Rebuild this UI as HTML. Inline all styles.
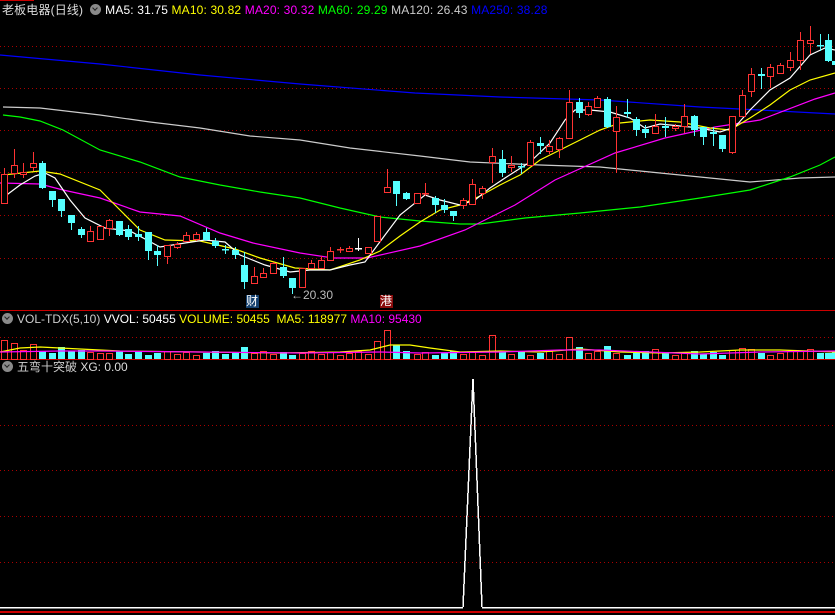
<!DOCTYPE html><html><head><meta charset="utf-8"><style>
body{margin:0;background:#000;width:835px;height:615px;overflow:hidden;position:relative;font-family:"Liberation Sans","Noto Sans CJK SC",sans-serif}
.t{position:absolute;font-size:12px;white-space:nowrap;line-height:14px}
.ic{display:inline-block;width:11px;height:11px;border-radius:50%;background:#8a8a8a;vertical-align:-1px;margin-right:4px;position:relative}
.ic:after{content:"";position:absolute;left:3px;top:2px;width:3px;height:3px;border-right:1.5px solid #222;border-bottom:1.5px solid #222;transform:rotate(45deg)}
</style></head><body>
<svg id="s" width="835" height="615" style="position:absolute;left:0;top:0" shape-rendering="crispEdges"></svg>
<div class="t" style="left:2px;top:3px;color:#ddd;letter-spacing:0.15px">老板电器(日线) &nbsp;<span class="ic"></span><span style="color:#fff">MA5: 31.75 </span> <span style="color:#ff0">MA10: 30.82</span> <span style="color:#f0f"> MA20: 30.32</span> <span style="color:#0f0"> MA60: 29.29</span> <span style="color:#ccc"> MA120: 26.43</span> <span style="color:#00f"> MA250: 38.28</span></div>
<div class="t" style="left:2px;top:312px;color:#ccc"><span class="ic"></span>VOL-TDX(5,10) <span style="color:#fff">VVOL: 50455</span> <span style="color:#ff0">VOLUME: 50455 &nbsp;MA5: 118977</span> <span style="color:#f0f">MA10: 95430</span></div>
<div class="t" style="left:2px;top:360px;color:#ccc"><span class="ic"></span>五弯十突破 <span style="color:#ddd">XG: 0.00</span></div>
<div class="t" style="left:246px;top:295px;width:13px;height:13px;background:#14406e;color:#fff;font-size:12px;line-height:13px">财</div>
<div class="t" style="left:380px;top:295px;width:13px;height:13px;background:#8a0c0c;color:#fff;font-size:12px;line-height:13px">港</div>
<div class="t" style="left:291px;top:288px;color:#bbb">←20.30</div>
<script>
var s=document.getElementById('s'),h='';
function L(x1,y1,x2,y2,c,w,d){h+='<line x1="'+x1+'" y1="'+y1+'" x2="'+x2+'" y2="'+y2+'" stroke="'+c+'" stroke-width="'+(w||1)+'"'+(d?' stroke-dasharray="1,3"':'')+'/>';}
function P(p,c){h+='<polyline fill="none" stroke="'+c+'" stroke-width="1.2" shape-rendering="auto" points="'+p+'"/>';}
[46,88,130,172,215,258].forEach(function(y){L(0,y+.5,835,y+.5,'#a00',1,1)});
L(0,337.5,835,337.5,'#a00',1,1);
[425,470,516,562].forEach(function(y){L(0,y+.5,835,y+.5,'#a00',1,1)});
L(0,0.5,34,0.5,'#c00');L(0,310.5,835,310.5,'#c00');L(0,359.5,835,359.5,'#c00');L(0,612,835,612,'#c00',2);
P('0,55 100,64 200,75 300,84 415,93 500,97 600,100 700,107 760,110 835,114','#00f');
P('3,107 40,108 100,115 150,122 200,128 250,136 300,140 350,148 420,156 470,162 540,165 600,167 650,172 700,177 750,182 800,178 835,177','#ccc');
P('3,115 20,117 40,121 63,130 100,150 140,162 180,177 220,185 260,192 300,198 340,208 380,217 420,221 460,224 480,224 525,218 580,213 640,207 700,198 750,190 790,177 820,165 835,157','#0f0');
P('0,183 40,184 63,190 100,198 140,212 180,216 220,233 253,243 300,253 333,258 367,258 420,246 465,230 515,205 555,180 615,153 665,138 715,127 760,120 815,99 835,93','#f0f');
P('3,175 40,171 60,174 100,190 120,210 140,230 165,240 200,241 235,249 260,258 295,268 330,270 360,260 380,251 400,236 420,222 440,210 460,205 480,196 500,185 520,175 540,160 560,150 580,140 600,130 620,123 650,120 680,122 710,128 730,130 750,118 770,105 790,90 810,80 835,73','#ff0');
P('4,197 20,185 35,176 45,173 55,178 70,200 85,218 105,228 130,231 160,247 185,243 205,240 225,242 240,255 265,265 290,272 310,270 330,270 350,265 365,262 385,235 400,215 425,195 440,200 460,205 475,200 490,188 505,178 530,162 550,143 565,120 575,110 590,110 610,112 630,118 645,128 660,124 680,126 700,128 720,132 735,127 750,110 770,90 790,78 810,55 825,48 835,50','#fff');
var C=[[4,174,203,168,203,'r'],[14,165,173,149,177,'r'],[23,172,174,163,177,'r'],[33,163,167,152,170,'r'],[42,163,188,161,188,'c'],[52,191,200,191,206,'c'],[61,199,211,199,216,'c'],[71,215,223,215,229,'c'],[81,229,235,227,237,'c'],[90,231,241,226,241,'r'],[100,226,239,226,239,'r'],[109,220,228,219,235,'r'],[119,221,235,221,235,'c'],[128,229,237,225,239,'c'],[138,234,237,226,240,'c'],[148,232,251,232,259,'c'],[157,251,255,245,265,'c'],[167,245,256,245,263,'r'],[177,244,247,242,248,'r'],[186,235,241,232,241,'r'],[196,234,239,232,240,'r'],[206,232,240,228,240,'c'],[215,241,246,238,247,'c'],[225,249,250,245,253,'c'],[235,250,255,247,258,'c'],[244,265,282,252,288,'c'],[254,276,283,267,283,'r'],[263,273,277,268,277,'r'],[273,263,273,262,273,'r'],[283,267,276,257,277,'c'],[292,278,288,278,293,'c'],[302,268,287,268,287,'r'],[311,263,268,260,268,'r'],[321,260,268,256,268,'r'],[330,251,260,247,260,'r'],[340,249,250,247,252,'r'],[349,248,251,246,251,'r'],[358,248,248,238,250,'w'],[368,247,253,247,253,'r'],[377,216,241,216,241,'r'],[387,187,192,169,192,'r'],[396,181,194,181,205,'c'],[406,193,199,192,199,'c'],[417,193,203,193,203,'r'],[425,193,194,183,195,'r'],[435,198,205,196,212,'c'],[444,205,210,199,212,'c'],[453,211,216,211,220,'c'],[463,200,205,198,208,'r'],[472,184,204,179,204,'r'],[482,188,193,186,198,'r'],[492,156,162,148,182,'r'],[502,159,173,150,176,'c'],[511,165,167,156,171,'r'],[521,166,167,163,173,'c'],[530,142,165,140,165,'r'],[540,143,146,137,153,'c'],[549,146,151,140,153,'r'],[559,138,149,137,157,'r'],[569,102,138,90,138,'r'],[579,102,113,98,117,'c'],[588,106,114,102,115,'r'],[597,98,107,96,107,'r'],[607,99,127,97,127,'c'],[616,117,131,106,172,'r'],[627,112,114,99,117,'c'],[636,119,130,117,135,'c'],[645,129,133,125,137,'c'],[655,126,133,114,133,'r'],[665,126,128,117,136,'c'],[675,126,128,124,130,'r'],[684,116,126,104,132,'r'],[694,116,130,115,135,'c'],[703,127,137,127,144,'c'],[713,132,134,127,145,'c'],[722,135,149,135,151,'c'],[732,116,152,116,153,'r'],[742,95,116,90,116,'r'],[751,74,91,68,96,'r'],[761,74,76,68,88,'c'],[770,67,76,64,87,'r'],[780,65,73,63,73,'r'],[790,60,67,52,70,'r'],[800,40,60,32,69,'r'],[810,40,43,26,53,'r'],[820,45,46,34,50,'c'],[828,40,61,34,61,'c'],[835,61,65,60,66,'c']];
var VH={4:19,14:16,23:9,33:15,42:8,52:6,61:12,71:8,81:9,90:7,100:6,244:12,302:6,377:18,387:29,396:14,492:24,502:7,569:22,579:12,607:13,616:6,655:10,684:7,732:9,742:11,751:10,761:6,800:8,810:10,820:6};
C.forEach(function(c,i){var x=c[0],col=c[5]=='r'?'#f33':c[5]=='c'?'#5ff':'#fff';
L(x+.5,c[3],x+.5,c[4]+1,col);
var t=Math.min(c[1],c[2]),b=Math.max(c[1],c[2]);
if(b-t<2){L(x-3,t+.5,x+4,t+.5,col,1.5);}
else if(c[5]=='r')h+='<rect x="'+(x-2.5)+'" y="'+(t+.5)+'" width="6" height="'+(b-t)+'" fill="#000" stroke="'+col+'"/>';
else h+='<rect x="'+(x-3)+'" y="'+t+'" width="7" height="'+(b-t)+'" fill="'+col+'"/>';
var vh=VH[x]||(4+((i*7)%5));
if(c[5]=='c')h+='<rect x="'+(x-3)+'" y="'+(359-vh)+'" width="7" height="'+vh+'" fill="#5ff"/>';
else h+='<rect x="'+(x-2.5)+'" y="'+(359.5-vh)+'" width="6" height="'+vh+'" fill="none" stroke="#f33"/>';});
P('0,352 20,348 40,347 80,349 120,351 200,352 280,353 340,352 370,350 390,345 410,345 430,348 460,352 500,351 540,352 580,349 620,352 660,353 700,352 740,350 780,350 835,352','#ff0');
P('0,352 60,351 100,351 200,352 300,353 380,352 420,353 500,352 560,350 600,350 650,352 700,354 760,352 835,351','#f0f');
L(0,607.5,463,607.5,'#fff',1.5);L(482,607.5,835,607.5,'#fff',1.5);
h+='<polyline fill="none" stroke="#fff" stroke-width="1.5" points="463,607 473,379 482,607"/>';
s.innerHTML=h;
</script>
</body></html>
